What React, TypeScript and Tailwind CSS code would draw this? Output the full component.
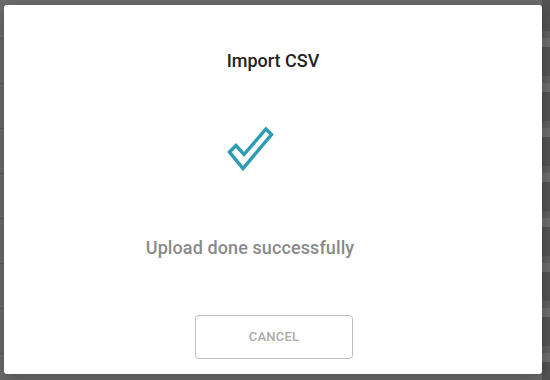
export default function App() {
  const rows = [0, 1, 2, 3, 4, 5, 6, 7, 8]

  return (
    <div className="relative w-[550px] h-[380px] overflow-hidden bg-[#6b6b6b] font-['Roboto',sans-serif]">
      {/* page behind the backdrop */}
      <div className="flex h-full">
        <div className="flex-1 flex flex-col pt-[38px]">
          {rows.map((r) => (
            <div key={r} className="h-[45px] shrink-0 border-t border-[#5c5c5c]" />
          ))}
        </div>
        <div className="w-[8px] flex flex-col bg-[#535353] pt-[31px]">
          {rows.map((r) => (
            <div key={r} className="h-[45px] shrink-0 flex flex-col">
              <div className="h-[7px] bg-[#606060]" />
              <div className="h-[9px] bg-[#6e6e6e]" />
            </div>
          ))}
        </div>
      </div>

      {/* dialog */}
      <div className="absolute left-[4px] top-[5px] w-[538px] h-[369px] bg-white rounded-[3px] shadow-[0_4px_16px_rgba(0,0,0,0.25)] flex flex-col items-center">
        <h2 className="mt-[44px] h-[24px] leading-[24px] text-[18px] font-medium text-[#222222]">
          Import CSV
        </h2>

        <div className="mr-[46px] flex flex-col items-center">
          <svg width="50" height="50" viewBox="0 0 50 50" className="mt-[51px]">
            <path
              d="M4.5 28 L11 21.5 L19 30.5 L41 5 L46.5 10.5 L18 44.5 Z"
              fill="none"
              stroke="#2a9db5"
              strokeWidth="3.4"
              strokeLinejoin="miter"
            />
          </svg>
          <p className="mt-[62px] h-[24px] leading-[24px] text-[18px] font-medium tracking-[0.1px] text-[#8a8a8a]">
            Upload done successfully
          </p>
        </div>

        <button className="mt-[55px] ml-[2px] w-[158px] h-[44px] rounded-[4px] border border-[#bdbdbd] text-[13px] font-medium text-[#aaaaaa] tracking-[0.2px]">
          CANCEL
        </button>
      </div>
    </div>
  )
}
